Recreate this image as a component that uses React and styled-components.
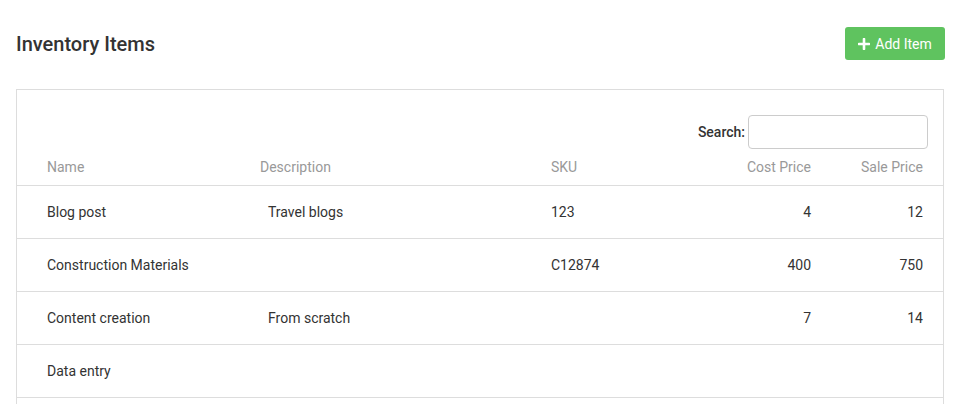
import React from 'react'
import styled, { createGlobalStyle } from 'styled-components'

const GlobalStyle = createGlobalStyle`
  body {
    margin: 0;
    background: #fff;
    font-family: Roboto, "Liberation Sans", Arial, sans-serif;
    color: #333;
  }
`;

const items = [
  { name: 'Blog post', description: 'Travel blogs', sku: '123', cost: '4', sale: '12' },
  { name: 'Construction Materials', description: '', sku: 'C12874', cost: '400', sale: '750' },
  { name: 'Content creation', description: 'From scratch', sku: '', cost: '7', sale: '14' },
  { name: 'Data entry', description: '', sku: '', cost: '', sale: '' },
  { name: '', description: '', sku: '', cost: '', sale: '' },
];

function PlusIcon() {
  return (
    <svg width="12" height="12" viewBox="0 0 12 12" aria-hidden="true">
      <path d="M6 1v10M1 6h10" stroke="#fff" strokeWidth="2.6" strokeLinecap="round" />
    </svg>
  )
}

function App() {
  return (
    <Page>
      <GlobalStyle />
      <TopBar>
        <Title>Inventory Items</Title>
        <AddButton type="button">
          <PlusIcon />
          Add Item
        </AddButton>
      </TopBar>
      <Panel>
        <SearchRow>
          <label htmlFor="search">Search:</label>
          <SearchInput id="search" type="text" />
        </SearchRow>
        <Table>
          <HeadRow>
            <Cell>Name</Cell>
            <Cell>Description</Cell>
            <Cell>SKU</Cell>
            <Cell $right>Cost Price</Cell>
            <Cell $right>Sale Price</Cell>
          </HeadRow>
          {items.map((item, i) => (
            <Row key={i}>
              <Cell>{item.name}</Cell>
              <Cell $indent>{item.description}</Cell>
              <Cell>{item.sku}</Cell>
              <Cell $right>{item.cost}</Cell>
              <Cell $right>{item.sale}</Cell>
            </Row>
          ))}
        </Table>
      </Panel>
    </Page>
  )
}

const Page = styled.div`
  padding: 0 16px 0 16px;
  height: 404px;
  overflow: hidden;
`;

const TopBar = styled.div`
  display: flex;
  align-items: center;
  justify-content: space-between;
  padding-top: 27px;
  margin-bottom: 29px;
  margin-right: -1px;
`;

const Title = styled.h1`
  margin: 0;
  font-size: 20px;
  font-weight: 500;
  color: #333;
`;

const AddButton = styled.button`
  display: inline-flex;
  align-items: center;
  justify-content: center;
  gap: 5px;
  height: 33px;
  width: 100px;
  border: none;
  border-radius: 3px;
  background: #5fc35f;
  color: #fff;
  font-family: inherit;
  font-size: 14px;
  padding: 0 10px;
  cursor: pointer;
`;

const Panel = styled.div`
  border: 1px solid #ddd;
  padding-top: 25px;
`;

const SearchRow = styled.div`
  display: flex;
  justify-content: flex-end;
  align-items: center;
  gap: 3px;
  padding-right: 15px;
  font-size: 14px;
  font-weight: 500;
  color: #333;
`;

const SearchInput = styled.input`
  width: 180px;
  height: 34px;
  box-sizing: border-box;
  border: 1px solid #ccc;
  border-radius: 4px;
  padding: 0 8px;
  outline: none;
`;

const Table = styled.div`
  display: flex;
  flex-direction: column;
`;

const Row = styled.div`
  display: grid;
  grid-template-columns: 213px 291px 149px 111px 112px;
  align-items: center;
  height: 53px;
  padding-left: 30px;
  border-top: 1px solid #ddd;
  font-size: 14px;
  color: #333;
  box-sizing: border-box;
`;

const HeadRow = styled(Row)`
  height: 36px;
  border-top: none;
  color: #999;
`;

const Cell = styled.div`
  text-align: ${(p) => (p.$right ? 'right' : 'left')};
  padding-left: ${(p) => (p.$indent ? '8px' : '0')};
  white-space: nowrap;
`;

export default App
